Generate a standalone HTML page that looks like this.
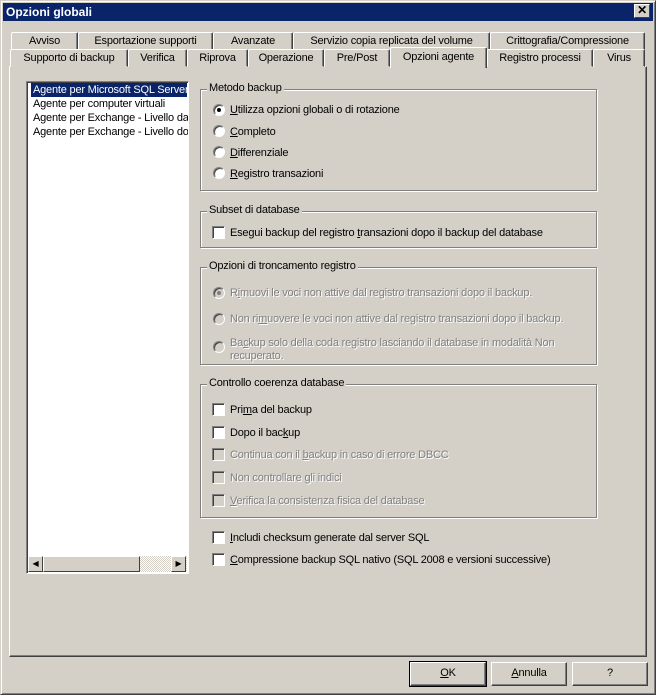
<!DOCTYPE html>
<html><head><style>
*{margin:0;padding:0;box-sizing:border-box}
body{width:656px;height:695px;background:#d4d0c8;font-family:"Liberation Sans",sans-serif;font-size:11px;letter-spacing:-0.2px;color:#000;position:relative;overflow:hidden}
.a{position:absolute;white-space:nowrap;margin-top:1px}
.win{position:absolute;left:0;top:0;width:656px;height:695px;border:1px solid;border-color:#d4d0c8 #404040 #404040 #d4d0c8;box-shadow:inset 1px 1px #fff,inset -1px -1px #808080}
.title{position:absolute;left:3px;top:3px;width:650px;height:18px;background:#0a246a;color:#fff;font-weight:bold;font-size:12px;padding:2px 3px;letter-spacing:0}
.xb{position:absolute;left:634px;top:4px;width:16px;height:14px;background:#d4d0c8;border:1px solid;border-color:#fff #404040 #404040 #fff;font-size:12px;line-height:11px;text-align:center;font-weight:bold;color:#000}
.tab{position:absolute;height:18px;border:1px solid;border-color:#fff #404040 transparent #fff;border-radius:2px 2px 0 0;text-align:center;line-height:17px;background:#d4d0c8;box-shadow:inset -1px 0 #808080}
.panel{position:absolute;left:9px;top:66px;width:638px;height:591px;border:1px solid;border-color:#fff #404040 #404040 #fff;box-shadow:inset -1px -1px #808080}
.list{position:absolute;left:26px;top:81px;width:163px;height:493px;background:#fff;border:1px solid;border-color:#808080 #fff #fff #808080;box-shadow:inset 1px 1px #404040;overflow:hidden}
.grp{position:absolute;border:1px solid #808080;box-shadow:1px 1px #fff,inset 1px 1px #fff}
.gl{position:absolute;top:-8px;left:6px;background:#d4d0c8;padding:0 2px}
.rb{position:absolute;width:12px;height:12px;border-radius:50%;background:#fff;border:1px solid;border-color:#808080 #fff #fff #808080;box-shadow:inset 1px 1px #404040}
.rb.on::after{content:"";position:absolute;left:3px;top:3px;width:4px;height:4px;border-radius:50%;background:#000}
.rb.dis{background:#d4d0c8}.rb.dis.on::after{background:#808080}
.cb{position:absolute;width:13px;height:13px;background:#fff;border:1px solid;border-color:#808080 #fff #fff #808080;box-shadow:inset 1px 1px #404040}
.cb.dis{background:#d4d0c8}
.dt{color:#808080;text-shadow:1px 1px #fff}
.btn{position:absolute;top:662px;width:76px;height:24px;border:1px solid;border-color:#fff #404040 #404040 #fff;box-shadow:inset -1px -1px #808080;text-align:center;line-height:21px}
</style></head><body>
<div class="win"></div>
<div class="title">Opzioni globali</div>
<div class="xb">✕</div>

<div class="tab" style="left:11px;top:32px;width:67px">Avviso</div>
<div class="tab" style="left:78px;top:32px;width:135px">Esportazione supporti</div>
<div class="tab" style="left:213px;top:32px;width:80px">Avanzate</div>
<div class="tab" style="left:293px;top:32px;width:197px">Servizio copia replicata del volume</div>
<div class="tab" style="left:490px;top:32px;width:155px">Crittografia/Compressione</div>

<div class="panel"></div>
<div class="tab" style="left:10px;top:49px;width:118px">Supporto di backup</div>
<div class="tab" style="left:128px;top:49px;width:59px">Verifica</div>
<div class="tab" style="left:187px;top:49px;width:61px">Riprova</div>
<div class="tab" style="left:248px;top:49px;width:76px">Operazione</div>
<div class="tab" style="left:324px;top:49px;width:66px">Pre/Post</div>
<div class="tab" style="left:390px;top:47px;width:97px;height:21px;border-bottom:none;z-index:2;line-height:18px">Opzioni agente</div>
<div class="tab" style="left:487px;top:49px;width:106px">Registro processi</div>
<div class="tab" style="left:593px;top:49px;width:52px">Virus</div>

<div class="list">
<div class="a" style="left:4px;top:0px;width:156px;height:14px;background:#0a246a;color:#fff;padding-left:2px;line-height:14px">Agente per Microsoft SQL Server</div>
<div class="a" style="left:6px;top:14px;line-height:14px">Agente per computer virtuali</div>
<div class="a" style="left:6px;top:28px;line-height:14px">Agente per Exchange - Livello database</div>
<div class="a" style="left:6px;top:42px;line-height:14px">Agente per Exchange - Livello documento</div>
<div class="a" style="left:1px;top:473px;width:159px;height:16px;background-image:repeating-conic-gradient(#fff 0 25%,#d4d0c8 0 50%);background-size:2px 2px"></div>
<div class="a" style="left:1px;top:473px;width:15px;height:16px;background:#d4d0c8;border:1px solid;border-color:#fff #404040 #404040 #fff;font-size:8px;text-align:center;line-height:13px">◀</div>
<div class="a" style="left:16px;top:473px;width:97px;height:16px;background:#d4d0c8;border:1px solid;border-color:#fff #404040 #404040 #fff"></div>
<div class="a" style="left:144px;top:473px;width:15px;height:16px;background:#d4d0c8;border:1px solid;border-color:#fff #404040 #404040 #fff;font-size:8px;text-align:center;line-height:13px">▶</div>
</div>

<div class="grp" style="left:200px;top:89px;width:397px;height:102px"><span class="gl">Metodo backup</span></div>
<div class="rb on" style="left:213px;top:104px"></div><div class="a" style="left:230px;top:103px"><u>U</u>tilizza opzioni globali o di rotazione</div>
<div class="rb" style="left:213px;top:125px"></div><div class="a" style="left:230px;top:125px"><u>C</u>ompleto</div>
<div class="rb" style="left:213px;top:146px"></div><div class="a" style="left:230px;top:146px"><u>D</u>ifferenziale</div>
<div class="rb" style="left:213px;top:167px"></div><div class="a" style="left:230px;top:167px"><u>R</u>egistro transazioni</div>

<div class="grp" style="left:200px;top:211px;width:397px;height:37px"><span class="gl">Subset di database</span></div>
<div class="cb" style="left:212px;top:226px"></div><div class="a" style="left:230px;top:226px">Esegui backup del registro <u>t</u>ransazioni dopo il backup del database</div>

<div class="grp" style="left:200px;top:267px;width:397px;height:98px"><span class="gl">Opzioni di troncamento registro</span></div>
<div class="rb dis on" style="left:213px;top:287px"></div><div class="a dt" style="left:230px;top:286px">R<u>i</u>muovi le voci non attive dal registro transazioni dopo il backup.</div>
<div class="rb dis" style="left:213px;top:313px"></div><div class="a dt" style="left:230px;top:312px">Non ri<u>m</u>uovere le voci non attive dal registro transazioni dopo il backup.</div>
<div class="rb dis" style="left:213px;top:341px"></div><div class="a dt" style="left:230px;top:336px;line-height:13px">Ba<u>c</u>kup solo della coda registro lasciando il database in modalità Non<br>recuperato.</div>

<div class="grp" style="left:200px;top:384px;width:397px;height:134px"><span class="gl">Controllo coerenza database</span></div>
<div class="cb" style="left:212px;top:403px"></div><div class="a" style="left:230px;top:403px">Pri<u>m</u>a del backup</div>
<div class="cb" style="left:212px;top:426px"></div><div class="a" style="left:230px;top:426px">Dopo il bac<u>k</u>up</div>
<div class="cb dis" style="left:212px;top:448px"></div><div class="a dt" style="left:230px;top:448px">Continua con il <u>b</u>ackup in caso di errore DBCC</div>
<div class="cb dis" style="left:212px;top:471px"></div><div class="a dt" style="left:230px;top:471px">Non controllare gli indici</div>
<div class="cb dis" style="left:212px;top:494px"></div><div class="a dt" style="left:230px;top:494px"><u>V</u>erifica la consistenza fisica del database</div>

<div class="cb" style="left:212px;top:531px"></div><div class="a" style="left:230px;top:531px"><u>I</u>ncludi checksum generate dal server SQL</div>
<div class="cb" style="left:212px;top:553px"></div><div class="a" style="left:230px;top:553px"><u>C</u>ompressione backup SQL nativo (SQL 2008 e versioni successive)</div>

<div class="btn" style="left:410px;outline:1px solid #000"><u>O</u>K</div>
<div class="btn" style="left:491px"><u>A</u>nnulla</div>
<div class="btn" style="left:572px">?</div>
</body></html>
